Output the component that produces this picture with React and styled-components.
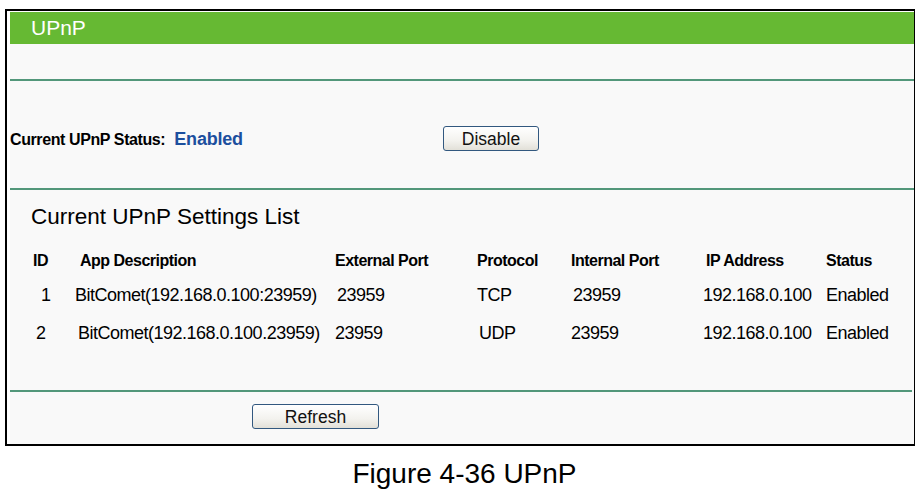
import React from "react";
import styled, { createGlobalStyle } from "styled-components";

const GlobalStyle = createGlobalStyle`
  html, body {
    margin: 0;
    padding: 0;
    background: #ffffff;
    font-family: "Liberation Sans", Arial, sans-serif;
  }
`;

const Page = styled.div`
  width: 924px;
  height: 496px;
  padding: 9px 0 0 5px;
  box-sizing: border-box;
`;

const Frame = styled.div`
  width: 910px;
  height: 437px;
  box-sizing: border-box;
  border: 2px solid #000;
  border-right-width: 1px;
  padding: 1px 0 0 3px;
  background: #fff;
`;

const Panel = styled.div`
  height: 100%;
  background: #f9f9f9;
  display: flex;
  flex-direction: column;
`;

const TitleBar = styled.div`
  height: 32px;
  background: #66b933;
  color: #fff;
  font-size: 21px;
  line-height: 32px;
  padding-left: 21px;
`;

const Divider = styled.div`
  height: 2px;
  background: #52977a;
  margin-top: ${(p) => p.$top || 0}px;
  margin-right: ${(p) => p.$right || 0}px;
`;

const StatusRow = styled.div`
  display: flex;
  align-items: center;
  padding: 45px 0 37px;
`;

const StatusLabel = styled.div`
  width: 433px;
  font-size: 16px;
  font-weight: bold;
  letter-spacing: -0.4px;
  color: #000;
  padding-top: 2px;
`;

const StatusValue = styled.span`
  color: #1c4f9e;
  font-size: 18px;
  letter-spacing: -0.2px;
  margin-left: 9px;
`;

const Button = styled.button`
  width: ${(p) => p.$width}px;
  height: 25px;
  box-sizing: border-box;
  border: 1px solid #32587f;
  border-radius: 3px;
  background: linear-gradient(#ffffff, #f3f2ee 60%, #e2e0d8);
  font-family: "Liberation Sans", Arial, sans-serif;
  font-size: 17.5px;
  color: #111;
  padding: 0;
  line-height: 22px;
`;

const ListHeading = styled.div`
  font-size: 22.5px;
  line-height: 22px;
  color: #000;
  padding: 16px 0 0 21px;
`;

const Table = styled.div`
  display: grid;
  grid-template-columns: 47px 255px 142px 94px 135px 120px 1fr;
  grid-template-rows: 30px 38px 38px;
  padding: 18px 0 0 23px;
  color: #000;
`;

const HeadCell = styled.div`
  font-size: 16px;
  font-weight: bold;
  letter-spacing: -0.5px;
  display: flex;
  align-items: center;
`;

const Cell = styled.div`
  font-size: 18px;
  letter-spacing: -0.5px;
  display: flex;
  align-items: center;
  margin-left: ${(p) => p.$shift || 0}px;
  white-space: nowrap;
`;

const Footer = styled.div`
  padding: 12px 0 0 242px;
`;

const Caption = styled.div`
  text-align: center;
  font-size: 28px;
  line-height: 30px;
  color: #000;
  padding-top: 13px;
`;

const columns = [
  { key: "id", label: "ID" },
  { key: "desc", label: "App Description" },
  { key: "ext", label: "External Port" },
  { key: "proto", label: "Protocol" },
  { key: "int", label: "Internal Port" },
  { key: "ip", label: "IP Address" },
  { key: "status", label: "Status" },
];

const rows = [
  {
    id: "1",
    desc: "BitComet(192.168.0.100:23959)",
    ext: "23959",
    proto: "TCP",
    int: "23959",
    ip: "192.168.0.100",
    status: "Enabled",
    shifts: { id: 8, desc: -5, ext: 2, proto: 0, int: 2, ip: -3, status: 0 },
  },
  {
    id: "2",
    desc: "BitComet(192.168.0.100.23959)",
    ext: "23959",
    proto: "UDP",
    int: "23959",
    ip: "192.168.0.100",
    status: "Enabled",
    shifts: { id: 3, desc: -2, ext: 0, proto: 2, int: 0, ip: -3, status: 0 },
  },
];

export default function App() {
  return (
    <Page>
      <GlobalStyle />
      <Frame>
        <Panel>
          <TitleBar>UPnP</TitleBar>
          <Divider $top={35} />
          <StatusRow>
            <StatusLabel>
              Current UPnP Status:<StatusValue>Enabled</StatusValue>
            </StatusLabel>
            <Button $width={96}>Disable</Button>
          </StatusRow>
          <Divider />
          <ListHeading>Current UPnP Settings List</ListHeading>
          <Table>
            {columns.map((c) => (
              <HeadCell key={c.key}>{c.label}</HeadCell>
            ))}
            {rows.map((r) =>
              columns.map((c) => (
                <Cell key={r.id + c.key} $shift={r.shifts[c.key]}>
                  {r[c.key]}
                </Cell>
              ))
            )}
          </Table>
          <Divider $top={38} $right={2} />
          <Footer>
            <Button $width={127}>Refresh</Button>
          </Footer>
        </Panel>
      </Frame>
      <Caption>Figure 4-36 UPnP</Caption>
    </Page>
  );
}
